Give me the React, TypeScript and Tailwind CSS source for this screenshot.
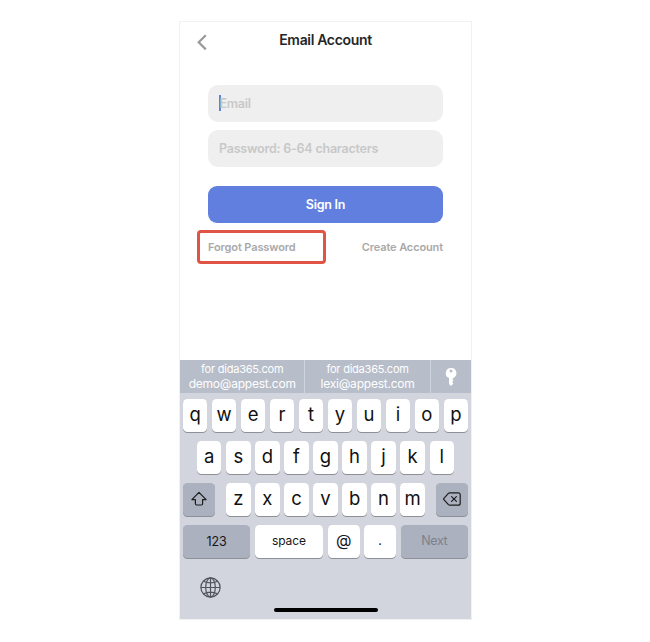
import type { ReactNode } from "react";

const keyBase =
  "flex h-[32.5px] items-center justify-center rounded-[4.5px] shadow-[0_1px_0_#8d9096]";

function LetterKey({ letter }: { letter: string }) {
  return (
    <button className={`${keyBase} w-[24.3px] bg-white pb-[3px] text-[18.5px] leading-none text-[#111]`}>
      {letter}
    </button>
  );
}

function Key({ className, children }: { className: string; children: ReactNode }) {
  return <button className={`${keyBase} ${className}`}>{children}</button>;
}

function Letters({ letters }: { letters: string }) {
  return (
    <div className="flex gap-[4.75px]">
      {letters.split("").map((l) => (
        <LetterKey key={l} letter={l} />
      ))}
    </div>
  );
}

function Suggestion({ email }: { email: string }) {
  return (
    <div className="flex w-[125.4px] flex-col items-center pt-[2px] text-white">
      <span className="text-[11px] leading-[14px] tracking-[-0.22px]">for dida365.com</span>
      <span className="text-[12px] leading-[15px] tracking-[-0.22px]">{email}</span>
    </div>
  );
}

export default function App() {
  return (
    <div className="h-[642px] w-[650px] bg-white pt-[21px] pl-[179px] font-['Inter','Liberation_Sans',sans-serif]">
      <main className="flex h-[599px] w-[293px] flex-col border border-[#f1f1f1] bg-white">
        <header className="flex h-[62.5px] items-start pt-[9px] pl-[17px]">
          <svg className="mt-[3px] h-4 w-[10px]" viewBox="0 0 10 16" fill="none" stroke="#999" strokeWidth="2.2">
            <path d="M8.8 1.2 1.7 8.3l7.1 7.1" />
          </svg>
          <h1 className="ml-[37px] w-[163px] text-center text-[14px] leading-[18px] font-semibold tracking-[-0.33px] text-[#262626]">
            Email Account
          </h1>
        </header>

        <section className="flex flex-col px-[28px]">
          <div className="flex h-[37.5px] items-center rounded-[10px] bg-[#efefef] pl-[11px] text-[12.5px] font-semibold tracking-[-0.25px] text-[#c8c8c8]">
            <span className="-mr-[1px] h-4 w-[1.5px] bg-[#6280de]" />
            <span className="pt-[2px]">Email</span>
          </div>
          <div className="mt-[7.5px] flex h-[37.5px] items-center rounded-[10px] bg-[#efefef] pt-[2px] pl-[11px] text-[12.5px] font-semibold tracking-[-0.22px] text-[#c8c8c8]">
            Password: 6-64 characters
          </div>
          <button className="mt-[18.5px] h-[37.5px] rounded-[9px] bg-[#617fde] pt-[2px] text-[12.5px] font-semibold tracking-[-0.25px] text-white">
            Sign In
          </button>
          <div className="mt-[7px] -ml-[11px] flex items-center justify-between text-[11px] font-semibold tracking-[-0.12px] text-[#a9a9a9]">
            <span className="flex h-[34px] w-[129px] items-center rounded-[4px] border-[3px] border-[#df5445] pl-2">
              Forgot Password
            </span>
            <span>Create Account</span>
          </div>
        </section>

        <section className="mt-auto flex h-[259px] flex-col bg-[#d2d5dd]">
          <div className="flex h-[33px] divide-x divide-[#d2d5dd] bg-[#b7bdc9]">
            <Suggestion email="demo@appest.com" />
            <Suggestion email="lexi@appest.com" />
            <div className="flex flex-1 items-center justify-center">
              <svg className="h-[18px] w-3" viewBox="0 0 12 18" fill="white">
                <path
                  fillRule="evenodd"
                  d="M6 0a5.2 5.2 0 0 0-2 10v6l2 2 2.4-2.4-1.2-1.5 1.3-1.5-1.1-1.2L8.4 9.9A5.2 5.2 0 0 0 6 0Zm0 1.4a1.5 1.5 0 1 1 0 3 1.5 1.5 0 0 1 0-3Z"
                />
              </svg>
            </div>
          </div>

          <div className="flex flex-col gap-[9.5px] px-[3px] pt-[6px]">
            <Letters letters="qwertyuiop" />
            <div className="flex justify-center">
              <Letters letters="asdfghjkl" />
            </div>
            <div className="flex justify-between">
              <Key className="w-8 bg-[#abb1be]">
                <svg className="h-4 w-4" viewBox="0 0 16 16" fill="none" stroke="#1c1c1e" strokeWidth="1.2" strokeLinejoin="round">
                  <path d="M8 1.4.9 8.6h3.5v4.2c0 .7.4 1.2 1.2 1.2h4.8c.8 0 1.2-.5 1.2-1.2V8.6h3.5Z" />
                </svg>
              </Key>
              <Letters letters="zxcvbnm" />
              <Key className="w-8 bg-[#abb1be]">
                <svg className="h-[14px] w-[18px]" viewBox="0 0 18 14" fill="none" stroke="#1c1c1e" strokeWidth="1.2" strokeLinecap="round" strokeLinejoin="round">
                  <path d="M6.8.8h8.4a2 2 0 0 1 2 2v8.4a2 2 0 0 1-2 2H6.8c-.6 0-1-.2-1.4-.6L.9 7.7a1 1 0 0 1 0-1.4l4.5-4.9c.4-.4.8-.6 1.4-.6ZM8.6 4.6l4.8 4.8M13.4 4.6 8.6 9.4" />
                </svg>
              </Key>
            </div>
            <div className="flex justify-between text-[12.5px] text-[#161618]">
              <Key className="w-[67.3px] bg-[#abb1be] pt-[2px] tracking-[-0.1px]">123</Key>
              <Key className="w-[68.3px] bg-white text-[12px] tracking-[-0.1px]">space</Key>
              <Key className="w-8 bg-white pb-[3px] text-[16px]">@</Key>
              <Key className="w-8 bg-white pt-[1px]">.</Key>
              <Key className="w-[67.3px] bg-[#abb1be] pt-[1px] tracking-[-0.4px] text-[#7c818b]">Next</Key>
            </div>
          </div>

          <svg className="mt-[19.5px] ml-[20px] h-[21px] w-[21px]" viewBox="0 0 21 21" fill="none" stroke="#50545a" strokeWidth="1.2">
            <circle cx="10.5" cy="10.5" r="9.6" />
            <ellipse cx="10.5" cy="10.5" rx="4.8" ry="9.6" />
            <path d="M10.5.9v19.2M.9 10.5h19.2M3.7 4.2c3.8 2.3 9.8 2.3 13.6 0M3.7 16.8c3.8-2.3 9.8-2.3 13.6 0" />
          </svg>
          <div className="mt-auto mb-[7px] ml-[94px] h-1 w-[104px] rounded-full bg-black" />
        </section>
      </main>
    </div>
  );
}
